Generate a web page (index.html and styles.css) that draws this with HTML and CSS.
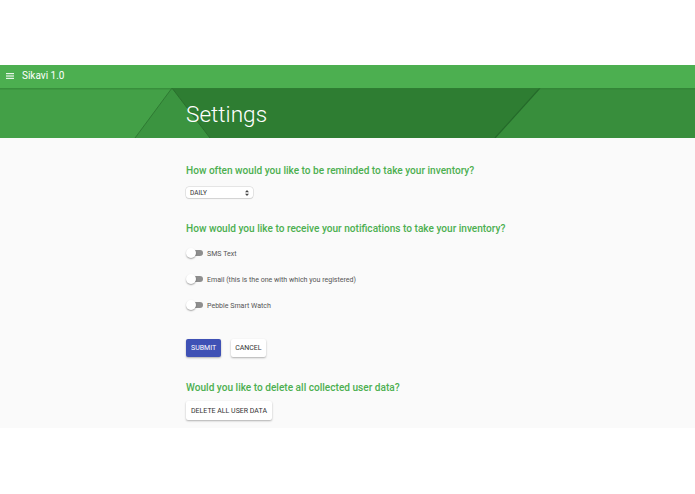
FILE: index.html
```html
<!DOCTYPE html>
<html lang="en">
  <head>
    <title>Sikavi 1.0 - Settings</title>
    <meta charset="UTF-8">
    <link rel="stylesheet" href="styles.css">
  </head>

  <body>
    <div class="topspace"></div>
    <div class="toolbar">
      <span class="menu-icon">
        <svg width="8" height="6" viewBox="0 0 8 6">
          <rect x="0" y="0" width="8" height="1.2" fill="#e8f5e9"/>
          <rect x="0" y="2.4" width="8" height="1.2" fill="#e8f5e9"/>
          <rect x="0" y="4.8" width="8" height="1.2" fill="#e8f5e9"/>
        </svg>
      </span>
      <span class="app-name">Sikavi 1.0</span>
    </div>

    <div class="banner">
      <svg class="banner-bg" viewBox="0 0 695 50" preserveAspectRatio="none">
        <rect x="0" y="0" width="695" height="50" fill="#43a047"/>
        <polygon points="172,0 135,50 210,50" fill="#3b9440"/>
        <polygon points="172,0 540,0 495,50 210,50" fill="#2e7d32"/>
        <polygon points="540,0 695,0 695,50 495,50" fill="#388e3c"/>
        <line x1="172" y1="0" x2="135" y2="50" stroke="#2f7a33" stroke-width="1"/>
        <line x1="172" y1="0" x2="210" y2="50" stroke="#2a6f2d" stroke-width="1"/>
        <line x1="540" y1="0" x2="495" y2="50" stroke="#24692a" stroke-width="1.2"/>
        <rect x="0" y="0" width="695" height="1.5" fill="#2e7d32" opacity="0.5"/>
      </svg>
      <h1 class="title">Settings</h1>
    </div>

    <div class="content">
      <div class="column">
        <h2 class="question q-first">How often would you like to be reminded to take your inventory?</h2>
        <div class="select-box">
          <span>DAILY</span>
          <svg class="arrows" width="4" height="6" viewBox="0 0 4 6">
            <polygon points="2,0 4,2.3 0,2.3" fill="#444"/>
            <polygon points="0,3.7 4,3.7 2,6" fill="#444"/>
          </svg>
        </div>

        <h2 class="question q-second">How would you like to receive your notifications to take your inventory?</h2>
        <div class="switch-list">
          <label class="switch-row"><span class="switch"><span class="track"></span><span class="knob"></span></span>SMS Text</label>
          <label class="switch-row"><span class="switch"><span class="track"></span><span class="knob"></span></span>Email (this is the one with which you registered)</label>
          <label class="switch-row"><span class="switch"><span class="track"></span><span class="knob"></span></span>Pebble Smart Watch</label>
        </div>

        <div class="buttons">
          <span class="button primary">SUBMIT</span>
          <span class="button">CANCEL</span>
        </div>

        <h2 class="question q-third">Would you like to delete all collected user data?</h2>
        <span class="button wide">DELETE ALL USER DATA</span>
      </div>
    </div>
  </body>
</html>
```

FILE: styles.css
```css
body {
  margin: 0;
  font-family: Roboto, "Liberation Sans", sans-serif;
  background: #ffffff;
}
.topspace {height: 65px;}
.toolbar {
  height: 23px;
  background-color: #4caf50;
  display: flex;
  align-items: center;
  padding-left: 6px;
  color: #ffffff;
}
.menu-icon {
  display: flex;
  margin-right: 8px;
  margin-top: -1px;
}
.app-name {
  font-size: 10px;
  margin-top: -2px;
}
.banner {
  position: relative;
  height: 50px;
  overflow: hidden;
}
.banner-bg {
  position: absolute;
  left: 0;
  top: 0;
  width: 100%;
  height: 100%;
}
.title {
  position: relative;
  margin: 0;
  padding-left: 186px;
  line-height: 53px;
  font-size: 22.6px;
  font-weight: 300;
  color: #ffffff;
}
.content {
  background: #fafafa;
  padding: 0 0 8px 0;
  box-shadow: 0 3px 6px -2px rgba(0, 0, 0, 0.12);
}
.column {
  margin-left: 186px;
  padding-top: 26px;
}
.question {
  margin: 0;
  font-size: 10.1px;
  line-height: 14px;
  font-weight: 500;
  color: #4caf50;
}
.q-second {margin-top: 24px;}
.q-third {margin-top: 24px;}
.select-box {
  margin-top: 9px;
  width: 67px;
  height: 11px;
  box-sizing: border-box;
  padding: 0 4px;
  background: #ffffff;
  border-radius: 3px;
  box-shadow: 0 0 0 0.5px #d0d0d0, 0 1px 1px rgba(0,0,0,0.15);
  display: flex;
  align-items: center;
  justify-content: space-between;
  font-size: 6.5px;
  color: #333333;
}
.switch-list {
  margin-top: 11px;
  display: flex;
  flex-direction: column;
  gap: 14px;
}
.switch-row {
  display: flex;
  align-items: center;
  height: 12px;
  font-size: 7.05px;
  color: #555555;
}
.switch {
  position: relative;
  width: 18px;
  height: 12px;
  margin-right: 3px;
}
.track {
  position: absolute;
  left: 5px;
  top: 3px;
  width: 12px;
  height: 6px;
  border-radius: 3px;
  background: #8e8e8e;
}
.knob {
  position: absolute;
  left: 0;
  top: 1px;
  width: 10px;
  height: 10px;
  border-radius: 50%;
  background: #ffffff;
  box-shadow: 0 1px 1.5px rgba(0,0,0,0.35);
}
.buttons {
  margin-top: 28px;
  display: flex;
  gap: 10px;
}
.button {
  display: inline-flex;
  align-items: center;
  justify-content: center;
  height: 18px;
  padding: 0 4px;
  background: #ffffff;
  color: #333333;
  font-size: 7px;
  border-radius: 2px;
  box-shadow: 0 1px 2px rgba(0,0,0,0.3);
}
.button.primary {
  background: #3f51b5;
  color: #ffffff;
  padding: 0 5px;
}
.button.wide {
  margin-top: 6px;
  height: 19px;
  padding: 0 5px;
}
```
